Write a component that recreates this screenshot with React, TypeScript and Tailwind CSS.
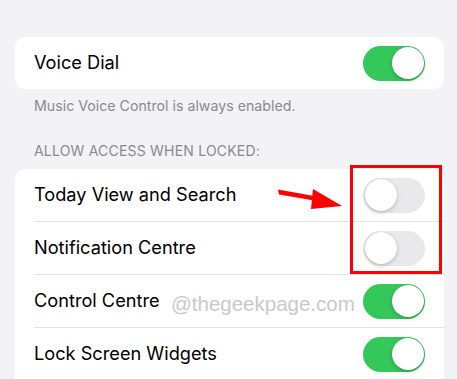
import React from "react";

function Toggle({ on }: { on: boolean }) {
  return (
    <div
      className={
        "relative h-[35px] w-[62px] shrink-0 rounded-full " +
        (on ? "bg-[#34c759]" : "bg-[#e9e9eb]")
      }
    >
      <div
        className={
          "absolute top-[1.5px] h-[32px] w-[32px] rounded-full bg-white shadow-[0_2px_4px_rgba(0,0,0,0.18),0_0_1px_rgba(0,0,0,0.2)] " +
          (on ? "right-[1.5px]" : "left-[1.5px]")
        }
      />
    </div>
  );
}

function Row({ label, on, last }: { label: string; on: boolean; last?: boolean }) {
  return (
    <div className="pl-[19px]">
      <div
        className={
          "flex h-[53px] items-center justify-between pr-[19px] " +
          (last ? "" : "border-b border-[#e3e3e6]")
        }
      >
        <span className="text-[18.2px] text-black">{label}</span>
        <Toggle on={on} />
      </div>
    </div>
  );
}

export default function App() {
  return (
    <div
      className="relative h-[379px] w-[457px] overflow-hidden bg-[#f2f2f7] pl-[15px] pr-[13px] pt-[37px]"
      style={{ fontFamily: "Inter, 'Liberation Sans', sans-serif" }}
    >
      <div className="rounded-[10px] bg-white">
        <div className="flex h-[52px] items-center justify-between pl-[19px] pr-[19px]">
          <span className="text-[18.2px] text-black">Voice Dial</span>
          <Toggle on={true} />
        </div>
      </div>
      <div className="pl-[19px] pt-[8px] text-[14.2px] leading-[18px] text-[#8a8a8e]">
        Music Voice Control is always enabled.
      </div>
      <div className="pl-[19px] pt-[27px] text-[14px] leading-[18px] tracking-[0.2px] text-[#8a8a8e]">
        ALLOW ACCESS WHEN LOCKED:
      </div>
      <div className="mt-[9px] rounded-t-[10px] bg-white">
        <Row label="Today View and Search" on={false} />
        <Row label="Notification Centre" on={false} />
        <Row label="Control Centre" on={true} />
        <Row label="Lock Screen Widgets" on={true} />
      </div>

      <div
        className="absolute left-[171px] top-[289px] text-[20.5px] text-[#c9c9cc]"
        style={{ fontFamily: "'Liberation Sans', Arial, sans-serif" }}
      >
        @thegeekpage.com
      </div>

      <div className="absolute left-[350px] top-[165px] h-[109px] w-[92px] border-[3px] border-[#ff0000]" />

      <svg className="absolute left-[270px] top-[175px]" width="80" height="45" viewBox="0 0 80 45">
        <polygon points="8,14.5 9,19.5 44,25.5 44,21" fill="#ff0000" />
        <polygon points="43,14 72,31 41,34" fill="#ff0000" />
      </svg>
    </div>
  );
}
